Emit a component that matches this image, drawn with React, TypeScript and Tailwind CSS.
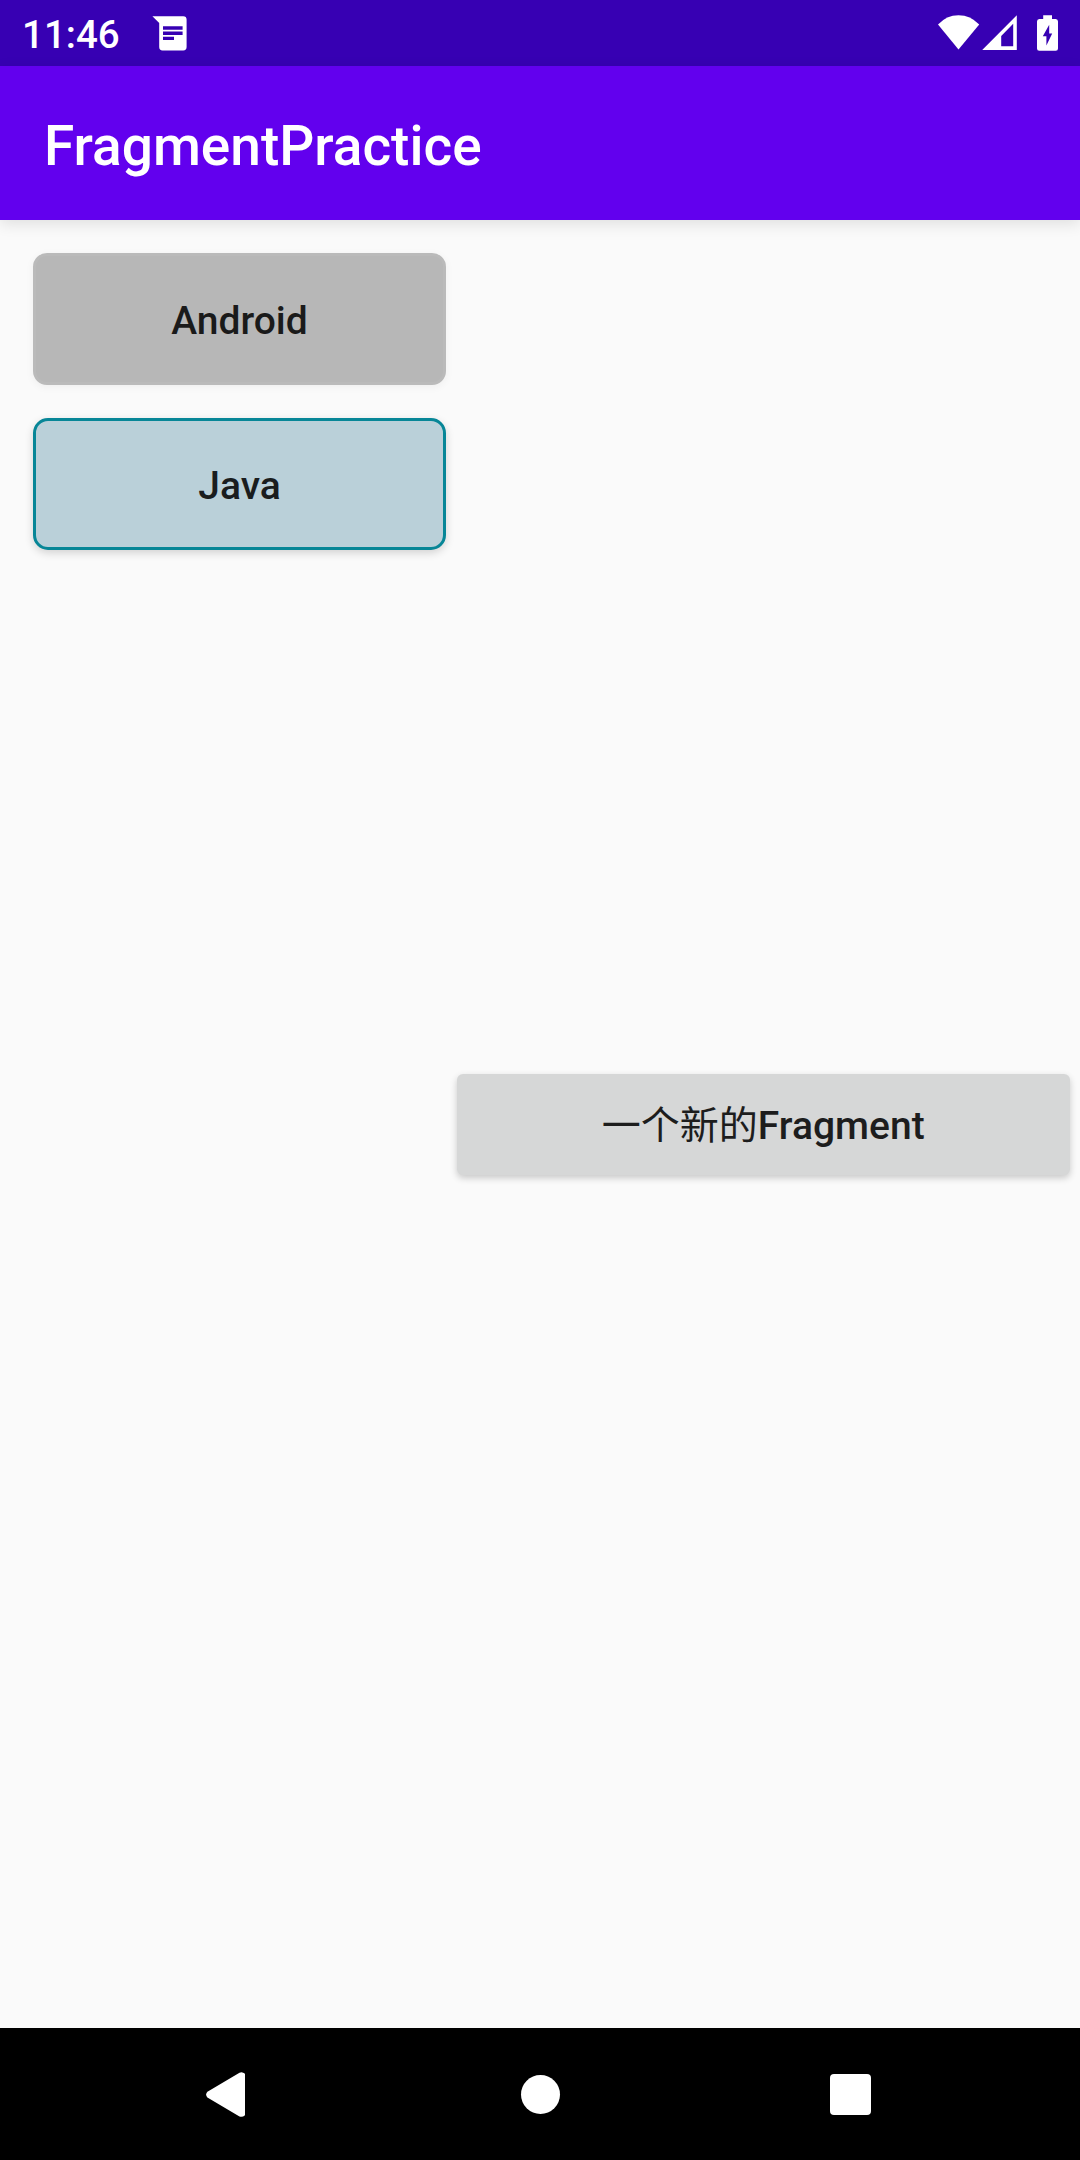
function StatusBar() {
  return (
    <div className="flex h-[66px] items-center bg-[#3700B3] text-white">
      <span className="ml-[22px] mt-[4px] w-[98px] whitespace-nowrap text-[38.5px] leading-[46px] font-medium">11:46</span>
      <svg className="ml-[32px]" width="36" height="66" viewBox="152 0 36 66" fill="currentColor">
        <path
          fillRule="evenodd"
          d="M152.4 16.2H183.2Q186.6 16.2 186.6 19.6V47Q186.6 50.4 183.2 50.4H162.5Q159.2 50.4 159.2 47V23ZM163 26.3V29.8H182.6V26.3ZM163 31.6V35H182.6V31.6ZM163 36.8V40.1H174V36.8Z"
        />
      </svg>
      <svg className="ml-auto" width="126" height="66" viewBox="936 0 126 66" fill="currentColor">
        <path d="M938 24.5Q946.5 15.2 958.5 15.2Q970.5 15.2 979.2 24.5L958.5 49.5Z" />
        <path fillRule="evenodd" d="M1016.8 15.2V50H982.2ZM1013.2 23.8L1001.2 35.9V46.2H1013.2Z" />
        <path
          fillRule="evenodd"
          d="M1043.2 15.2H1052V19H1055.7Q1058 19 1058 21.5V48.4Q1058 50.8 1055.7 50.8H1039.3Q1037 50.8 1037 48.4V21.5Q1037 19 1039.3 19H1043.2ZM1049.2 24.8L1042.8 36.2H1046.4V45.4L1052.2 33.4H1049.2Z"
        />
      </svg>
      <div className="w-[18px]" />
    </div>
  );
}

function NavigationBar() {
  return (
    <nav className="flex h-[132px] shrink-0 bg-black text-white">
      <svg className="ml-[206px] shrink-0" width="40" height="132" viewBox="206 0 40 132" fill="currentColor">
        <path d="M207.4 63.8L239.5 44.7Q242.2 43.3 245 45.8V87.2Q242.2 89.7 239.5 88.4L207.4 69.4Q204.8 66.6 207.4 63.8Z" />
      </svg>
      <div className="ml-[275px] mt-[47px] size-[39px] rounded-full bg-white" />
      <div className="ml-[270px] mt-[46px] h-[41.4px] w-[41.4px] rounded-[4px] bg-white" />
    </nav>
  );
}

export default function App() {
  return (
    <div className="flex h-[2160px] w-[1080px] flex-col overflow-hidden bg-[#FAFAFA] font-['Roboto','Noto_Sans_CJK_SC',sans-serif]">
      <StatusBar />
      <header className="z-10 flex h-[154px] shrink-0 items-center bg-[#6200EE] pl-[44px] pt-[5px] shadow-[0_4px_14px_rgba(0,0,0,0.11)]">
        <h1 className="text-[55px] leading-[64px] font-medium text-white">FragmentPractice</h1>
      </header>
      <main className="flex min-h-0 flex-1">
        <section className="flex w-[446px] shrink-0 flex-col gap-[33px] pl-[33px] pt-[33px]">
          <button className="h-[132px] rounded-[14px] border-[3px] border-[#BABABA] bg-[#B7B7B7] pt-[3px] text-[39px] leading-[46px] font-medium text-[#1A1A1A] shadow-[0_2px_8px_rgba(0,0,0,0.05)]">
            Android
          </button>
          <button className="h-[132px] rounded-[15px] border-[3px] border-[#078697] bg-[#BAD0D9] pt-[3px] text-[39px] leading-[46px] font-medium text-[#1A1D1E] shadow-[0_3px_8px_rgba(0,0,0,0.16)]">
            Java
          </button>
        </section>
        <section className="flex flex-1 items-center pl-[11px] pr-[10.5px]">
          <button className="flex h-[101px] w-full items-center justify-center rounded-[6px] bg-[#D6D7D7] pt-[4px] text-[39px] leading-[46px] font-medium text-[#1D1D1D] shadow-[0_3px_7px_rgba(0,0,0,0.2)]">
            <span className="font-normal">一个新的</span>
            <span>Fragment</span>
          </button>
        </section>
      </main>
      <NavigationBar />
    </div>
  );
}
